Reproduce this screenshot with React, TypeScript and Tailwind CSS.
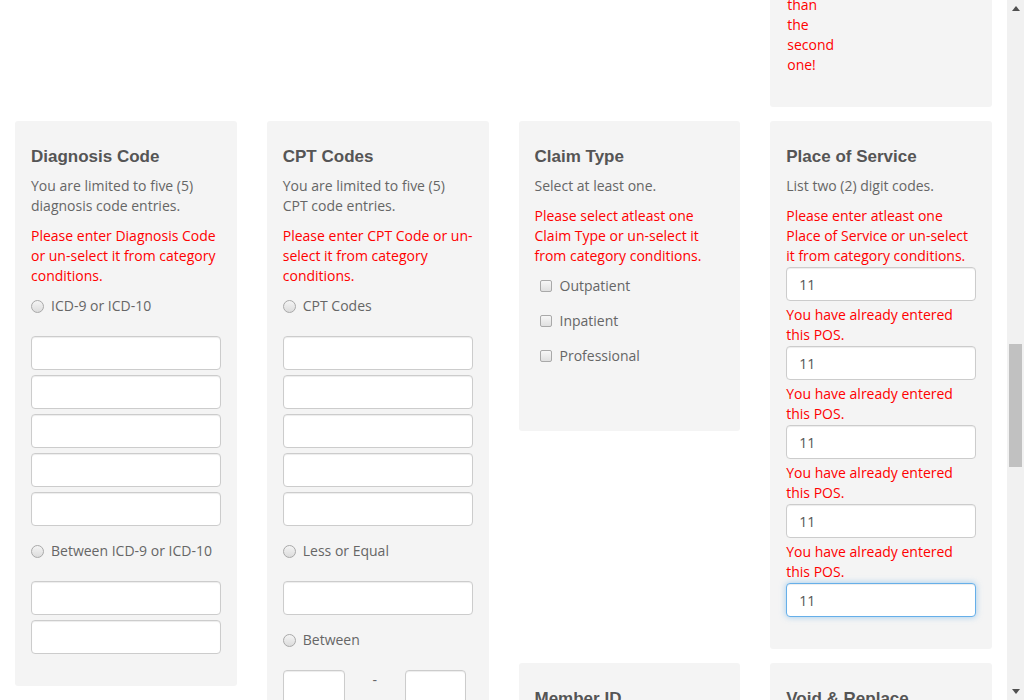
import React from "react";

const inputCls =
  "block w-full h-[34px] px-[12px] bg-white border border-[#ccc] rounded-[4px] shadow-[inset_0_1px_1px_rgba(0,0,0,0.075)] text-[14px] text-[#555] outline-none";

function Card({ children, className = "" }: { children: React.ReactNode; className?: string }) {
  return <div className={`bg-[#f4f4f4] rounded-[3px] px-[16px] ${className}`}>{children}</div>;
}

function Title({ children }: { children: React.ReactNode }) {
  return (
    <h4 className="text-[17px] leading-[20px] font-bold text-[#555] mb-[9px] font-['Liberation_Sans',Arial,sans-serif]">
      {children}
    </h4>
  );
}

function Radio({ label, className = "" }: { label: string; className?: string }) {
  return (
    <label className={`flex items-center h-[20px] ${className}`}>
      <span className="w-[13px] h-[13px] rounded-full border border-[#a9a9a9] bg-gradient-to-b from-[#f4f4f4] to-[#dcdcdc] mr-[7px]" />
      <span>{label}</span>
    </label>
  );
}

function Check({ label }: { label: string }) {
  return (
    <label className="flex items-center h-[20px] pl-[5px]">
      <span className="w-[12px] h-[12px] rounded-[2px] border border-[#a9a9a9] bg-gradient-to-b from-[#f7f7f7] to-[#e0e0e0] mr-[8px]" />
      <span>{label}</span>
    </label>
  );
}

function Inputs({ count }: { count: number }) {
  return (
    <div className="flex flex-col gap-[5px]">
      {Array.from({ length: count }).map((_, i) => (
        <input key={i} className={inputCls} defaultValue="" />
      ))}
    </div>
  );
}

export default function App() {
  return (
    <div className="w-[1024px] h-[700px] overflow-hidden flex bg-white font-['Open_Sans',sans-serif] text-[14px] leading-[20px] text-[#666]">
      <div className="flex-1 min-w-0 px-[15px] overflow-hidden">
        {/* previous row, scrolled mostly out of view */}
        <div className="grid grid-cols-4 gap-x-[30px] items-start">
          <Card className="col-start-4 -mt-[5px] pb-[32px]">
            <p className="w-[48px] pl-px text-[#ff0000]">than the second one!</p>
          </Card>
        </div>

        <div className="grid grid-cols-4 gap-x-[30px] gap-y-[14px] items-start mt-[14px]">
          {/* Diagnosis Code */}
          <Card className="row-span-2 pt-[26px] pb-[32px]">
            <Title>Diagnosis Code</Title>
            <p className="mb-[10px]">You are limited to five (5) diagnosis code entries.</p>
            <p className="mb-[10px] text-[#ff0000]">
              Please enter Diagnosis Code or un-select it from category conditions.
            </p>
            <Radio label="ICD-9 or ICD-10" className="mb-[20px]" />
            <Inputs count={5} />
            <Radio label="Between ICD-9 or ICD-10" className="mt-[15px] mb-[20px]" />
            <Inputs count={2} />
          </Card>

          {/* CPT Codes */}
          <Card className="row-span-2 pt-[26px] pb-[32px]">
            <Title>CPT Codes</Title>
            <p className="mb-[10px]">You are limited to five (5) CPT code entries.</p>
            <p className="mb-[10px] text-[#ff0000]">
              <span className="whitespace-nowrap">Please enter CPT Code or un-</span>
              <br />
              select it from category conditions.
            </p>
            <Radio label="CPT Codes" className="mb-[20px]" />
            <Inputs count={5} />
            <Radio label="Less or Equal" className="mt-[15px] mb-[20px]" />
            <Inputs count={1} />
            <Radio label="Between" className="mt-[15px] mb-[20px]" />
            <div className="flex items-start">
              <input className={`${inputCls} !w-[62px]`} defaultValue="" />
              <span className="w-[60px] text-center">-</span>
              <input className={`${inputCls} !w-[61px]`} defaultValue="" />
            </div>
          </Card>

          {/* Claim Type */}
          <Card className="pt-[26px] pb-[65px]">
            <Title>Claim Type</Title>
            <p className="mb-[10px]">Select at least one.</p>
            <p className="mb-[10px] text-[#ff0000]">
              Please select atleast one Claim Type or un-select it from category conditions.
            </p>
            <div className="flex flex-col gap-[15px]">
              <Check label="Outpatient" />
              <Check label="Inpatient" />
              <Check label="Professional" />
            </div>
          </Card>

          {/* Place of Service */}
          <Card className="pt-[26px] pb-[32px]">
            <Title>Place of Service</Title>
            <p className="mb-[10px]">List two (2) digit codes.</p>
            <p className="mb-[1px] text-[#ff0000]">
              Please enter atleast one Place of Service or un-select it from category conditions.
            </p>
            {[0, 1, 2, 3, 4].map((i) => (
              <div key={i}>
                <input
                  className={
                    i === 4
                      ? `${inputCls} !border-[#66afe9] !shadow-[inset_0_1px_1px_rgba(0,0,0,0.075),0_0_6px_rgba(102,175,233,0.6)]`
                      : inputCls
                  }
                  defaultValue="11"
                />
                {i < 4 && (
                  <p className="mt-[4px] mb-[1px] text-[#ff0000]">You have already entered this POS.</p>
                )}
              </div>
            ))}
          </Card>

          {/* Member ID */}
          <Card className="col-start-3 pt-[26px] pb-[32px]">
            <Title>Member ID</Title>
            <p className="mb-[10px]">Enter member ID.</p>
            <Inputs count={1} />
          </Card>

          {/* Void & Replace */}
          <Card className="col-start-4 pt-[26px] pb-[32px]">
            <Title>Void &amp; Replace</Title>
            <p className="mb-[10px]">Select one.</p>
            <Inputs count={1} />
          </Card>
        </div>
      </div>

      {/* scrollbar */}
      <div className="w-[17px] h-full bg-[#f1f1f1] flex flex-col">
        <div className="h-[17px] flex items-center justify-center">
          <svg width="8" height="5" viewBox="0 0 8 5">
            <path d="M0 5 L4 0 L8 5 Z" fill="#505050" />
          </svg>
        </div>
        <div className="mt-[327px] mx-[2px] h-[123px] bg-[#c1c1c1]" />
        <div className="flex-1" />
        <div className="h-[17px] flex items-center justify-center">
          <svg width="8" height="5" viewBox="0 0 8 5">
            <path d="M0 0 L8 0 L4 5 Z" fill="#505050" />
          </svg>
        </div>
      </div>
    </div>
  );
}
